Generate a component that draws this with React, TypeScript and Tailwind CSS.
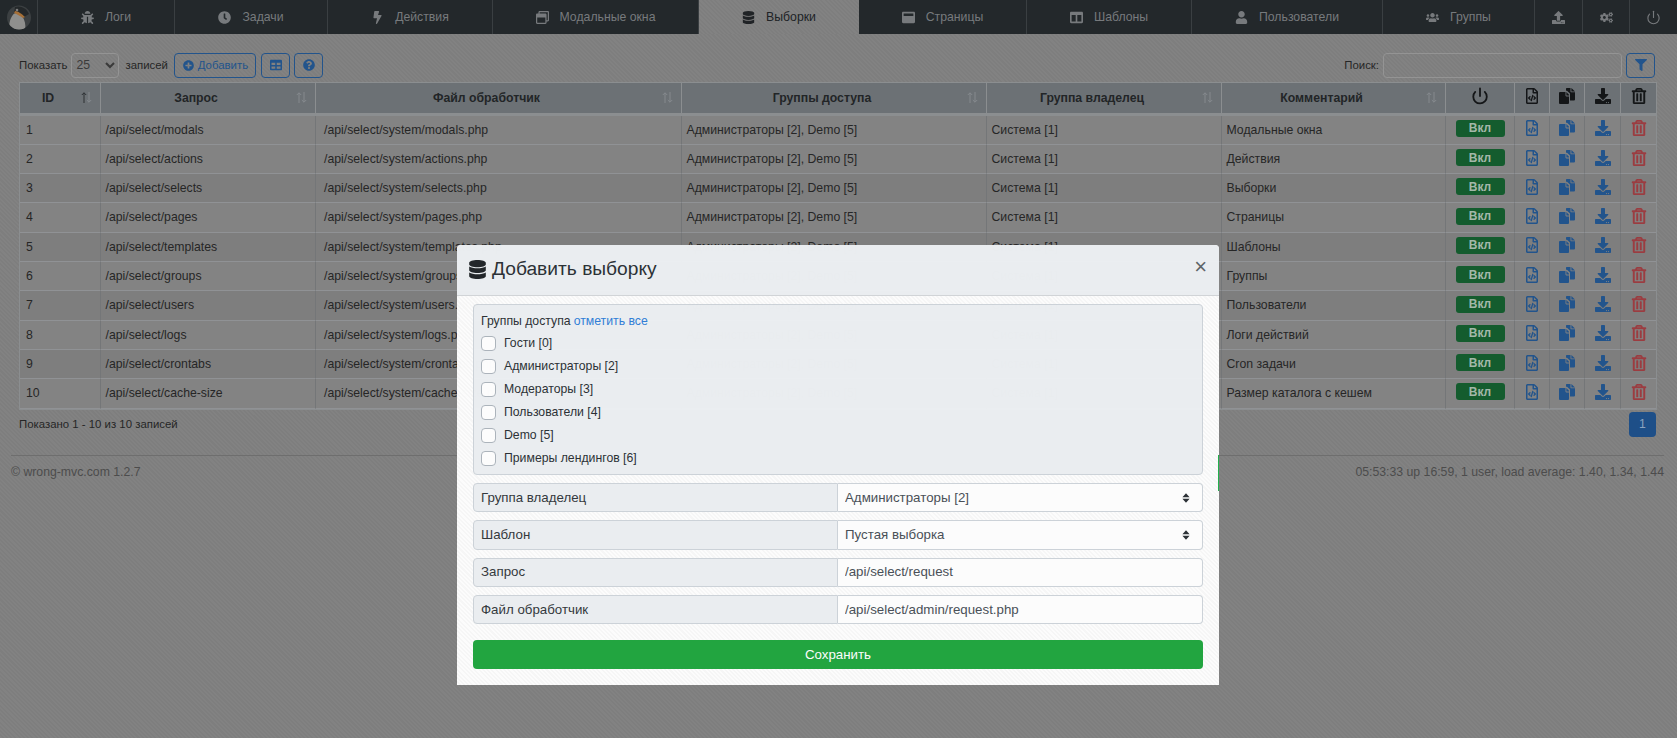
import { FaBug, FaClock, FaBolt, FaRegWindowRestore, FaDatabase, FaWindowMaximize, FaColumns, FaUser, FaUsers, FaUpload, FaCogs, FaPlusCircle, FaTable, FaQuestionCircle, FaFilter, FaRegFileCode, FaDownload, FaRegTrashAlt } from "react-icons/fa"
import { Power } from "lucide-react"

const tabs = [
    { label: "Логи", icon: FaBug },
    { label: "Задачи", icon: FaClock },
    { label: "Действия", icon: FaBolt },
    { label: "Модальные окна", icon: FaRegWindowRestore },
    { label: "Выборки", icon: FaDatabase, active: true },
    { label: "Страницы", icon: FaWindowMaximize },
    { label: "Шаблоны", icon: FaColumns },
    { label: "Пользователи", icon: FaUser },
    { label: "Группы", icon: FaUsers },
    { icon: FaUpload },
    { icon: FaCogs },
]

const rows = [
    ["modals", "Модальные окна"],
    ["actions", "Действия"],
    ["selects", "Выборки"],
    ["pages", "Страницы"],
    ["templates", "Шаблоны"],
    ["groups", "Группы"],
    ["users", "Пользователи"],
    ["logs", "Логи действий"],
    ["crontabs", "Cron задачи"],
    ["cache-size", "Размер каталога с кешем"],
]

const groups = ["Гости [0]", "Администраторы [2]", "Модераторы [3]", "Пользователи [4]", "Demo [5]", "Примеры лендингов [6]"]

const Logo = () => (
    <svg width="24" height="25" viewBox="0 0 24 25">
        <clipPath id="logo-clip"><circle cx="12" cy="12.5" r="12" /></clipPath>
        <g clipPath="url(#logo-clip)">
            <rect width="24" height="25" fill="#3c4042" />
            <path d="M2 25 C2 14 5 9 10 7 L15 11 C18 15 19 20 18 25 Z" fill="#8f8f8d" />
            <path d="M8 2 C13 0 20 3 22 9 L17 12 C14 10 10 8 7 8 Z" fill="#24282a" />
            <path d="M8 6 C11 6 15 9 18 12 L16 13 C13 11 10 9 7 8 Z" fill="#a56f37" />
            <circle cx="10" cy="5" r="1.3" fill="#7d7d7d" />
        </g>
    </svg>
)

const CopyIcon = ({ className }: { className: string }) => (
    <svg viewBox="0 0 16 16" className={className} fill="currentColor">
        <path d="M7 0.6 a0.8 0.8 0 0 1 0.8 -0.6 H11.5 V3.6 a0.6 0.6 0 0 0 0.6 0.6 H16 V11.4 a1 1 0 0 1 -1 1 H11 V5.5 L8 2.8 H7 Z" />
        <path d="M12.4 0 L16 3.4 H12.4 Z" />
        <path d="M1 4 H6.5 V7.6 a0.8 0.8 0 0 0 0.8 0.8 H10 V15 a1 1 0 0 1 -1 1 H1 a1 1 0 0 1 -1 -1 V5 a1 1 0 0 1 1 -1 Z" />
        <path d="M7.4 4 L10 6.8 V7.4 H7.4 Z" />
    </svg>
)

const TrashIcon = () => <FaRegTrashAlt size={16} stroke="currentColor" strokeWidth={14} />

const SortArrows = ({ active }: { active?: boolean }) => (
    <svg viewBox="0 0 11 11" className="absolute right-[8px] top-[9px] w-[11px] h-[11px]" fill="none" strokeWidth="1">
        <path d="M3 11 V0.8 M0.8 3 L3 0.8 L5.2 3" className={active ? "stroke-[#2c3033]" : "stroke-[#858a8e]"} />
        <path d="M8 0 V10.2 M5.8 8 L8 10.2 L10.2 8" className="stroke-[#858a8e]" />
    </svg>
)

const Th = ({ title, active }: { title: string; active?: boolean }) => (
    <th className="relative bg-[#6c7175] border-r border-b-[3px] border-r-[#8b8e90] border-b-[#8b8e90] pl-[6px] pr-[30px] pt-[1px] text-center font-bold text-[#222527]">
        {title}
        <SortArrows active={active} />
    </th>
)

const IconTh = ({ children }: { children: React.ReactNode }) => (
    <th className="bg-[#6c7175] border-r border-b-[3px] border-r-[#8b8e90] border-b-[#8b8e90] last:border-r-0 text-[#141618]">
        <div className="flex justify-center -mt-[3px]">{children}</div>
    </th>
)

const Td = ({ children, pad = "px-[4.5px]" }: { children: React.ReactNode; pad?: string }) => (
    <td className={`border-r border-b border-r-[#747678] border-b-[#909295] overflow-hidden whitespace-nowrap last:border-r-0 ${pad}`}>{children}</td>
)

const IconTd = ({ children, color }: { children: React.ReactNode; color: string }) => (
    <td className={`border-r border-b border-r-[#747678] border-b-[#909295] last:border-r-0 ${color}`}>
        <div className="flex justify-center -mt-[3px]">{children}</div>
    </td>
)

const FormRow = ({ label, children }: { label: string; children: React.ReactNode }) => (
    <div className="flex h-[29.33px] text-[13.3px]">
        <div className="w-[365px] bg-[#edf0f3] border border-[#ced4da] rounded-l-[4px] px-[7px] flex items-center text-[#33383c]">{label}</div>
        {children}
    </div>
)

const SelectField = ({ value }: { value: string }) => (
    <div className="relative flex-1">
        <select defaultValue={value} className="appearance-none w-full h-full bg-white border border-l-0 border-[#ced4da] rounded-r-[4px] px-[7px] text-[#495057] outline-none">
            <option>{value}</option>
        </select>
        <svg viewBox="0 0 10 12" className="absolute right-[13px] top-[10px] w-[8px] h-[10px] text-[#2b3035]" fill="currentColor">
            <path d="M5 0 L9.5 5 H0.5 Z M5 12 L0.5 7 H9.5 Z" />
        </svg>
    </div>
)

const TextField = ({ value }: { value: string }) => (
    <input readOnly defaultValue={value} className="flex-1 min-w-0 bg-white border border-l-0 border-[#ced4da] rounded-r-[4px] px-[7px] text-[#495057] outline-none" />
)

const App = () => {
    return (
        <div className="relative h-[738px] overflow-hidden text-[12.25px] text-[#262626] font-['Liberation_Sans',Arial,sans-serif] bg-[repeating-linear-gradient(45deg,#828282_0px,#828282_1.5px,#7e7e7e_1.5px,#7e7e7e_3px)]">
            <nav className="grid h-[34px] grid-cols-[38px_137px_153px_165px_206px_160px_168px_165px_191px_152px_48px_47px_47px] bg-[#23282b] text-[#777a7d]">
                <div className="flex items-center justify-center border-r border-[#3a3f42]">
                    <Logo />
                </div>
                {tabs.map((tab, i) => {
                    const Icon = tab.icon
                    return (
                        <div
                            key={i}
                            className={tab.active
                                ? "flex items-center justify-center gap-[11px] text-[#202326] bg-[repeating-linear-gradient(45deg,#828282_0px,#828282_1.5px,#7e7e7e_1.5px,#7e7e7e_3px)]"
                                : "flex items-center justify-center gap-[11px] border-r border-[#3a3f42]"}
                        >
                            <Icon size={13} />
                            {tab.label && <span>{tab.label}</span>}
                        </div>
                    )
                })}
                <div className="flex items-center justify-center">
                    <Power size={15} strokeWidth={1.8} />
                </div>
            </nav>

            <main className="pl-[11px] pr-[13px]">
                <div className="pl-[8px] pr-[9px]">
                    <div className="flex items-center justify-between pt-[15px] h-[47.6px] text-[11.4px]">
                        <div className="flex items-center">
                            <span>Показать</span>
                            <select defaultValue="25" className="ml-[4px] w-[48px] h-[25.4px] pl-0 border border-[#949494] rounded-[4px] bg-transparent text-[#3a3a3a] text-[12.25px]">
                                <option>25</option>
                            </select>
                            <span className="ml-[6px]">записей</span>
                            <button className="ml-[6.5px] flex items-center justify-center gap-[4px] w-[82px] h-[25.4px] border border-[#22548c] rounded-[4px] text-[#22548c]">
                                <FaPlusCircle size={11} />
                                Добавить
                            </button>
                            <button className="ml-[5px] flex items-center justify-center w-[29px] h-[25.4px] border border-[#22548c] rounded-[4px] text-[#22548c]">
                                <FaTable size={12} />
                            </button>
                            <button className="ml-[4px] flex items-center justify-center w-[29px] h-[25.4px] border border-[#22548c] rounded-[4px] text-[#22548c]">
                                <FaQuestionCircle size={12} />
                            </button>
                        </div>
                        <div className="flex items-center">
                            <span>Поиск:</span>
                            <input readOnly className="ml-[4px] w-[239px] h-[25.4px] border border-[#949494] rounded-[4px] bg-transparent" />
                            <button className="ml-[4px] flex items-center justify-center w-[29px] h-[25.4px] border border-[#22548c] rounded-[4px] text-[#22548c]">
                                <FaFilter size={12} />
                            </button>
                        </div>
                    </div>

                    <table className="w-[1637px] table-fixed border-separate border-spacing-0 border border-[#8b8e90]">
                        <colgroup>
                            <col className="w-[81px]" />
                            <col className="w-[215px]" />
                            <col className="w-[366px]" />
                            <col className="w-[305px]" />
                            <col className="w-[235px]" />
                            <col className="w-[224px]" />
                            <col className="w-[69px]" />
                            <col className="w-[35px]" />
                            <col className="w-[35px]" />
                            <col className="w-[36px]" />
                            <col className="w-[35px]" />
                        </colgroup>
                        <thead>
                            <tr className="h-[33px]">
                                <Th title="ID" active />
                                <Th title="Запрос" />
                                <Th title="Файл обработчик" />
                                <Th title="Группы доступа" />
                                <Th title="Группа владелец" />
                                <Th title="Комментарий" />
                                <IconTh><Power size={18} strokeWidth={2.4} /></IconTh>
                                <IconTh><FaRegFileCode size={16} /></IconTh>
                                <IconTh><CopyIcon className="w-[16px] h-[16px]" /></IconTh>
                                <IconTh><FaDownload size={16} /></IconTh>
                                <IconTh><TrashIcon /></IconTh>
                            </tr>
                        </thead>
                        <tbody>
                            {rows.map(([name, comment], i) => (
                                <tr key={name} className={i > 1 && i % 2 === 0 ? "h-[29.3px] bg-[#7e7e7e]" : "h-[29.3px] bg-[#838383]"}>
                                    <Td pad="px-[6px]">{i + 1}</Td>
                                    <Td>/api/select/{name}</Td>
                                    <Td pad="px-[8px]">/api/select/system/{name}.php</Td>
                                    <Td>Администраторы [2], Demo [5]</Td>
                                    <Td>Система [1]</Td>
                                    <Td>{comment}</Td>
                                    <IconTd color="text-[#145c2e]">
                                        <span className="flex items-center justify-center w-[49px] h-[17px] rounded-[3px] bg-[#145c2e] text-[#a3b8a9] font-bold text-[12px]">Вкл</span>
                                    </IconTd>
                                    <IconTd color="text-[#22548c]"><FaRegFileCode size={16} /></IconTd>
                                    <IconTd color="text-[#22548c]"><CopyIcon className="w-[16px] h-[16px]" /></IconTd>
                                    <IconTd color="text-[#22548c]"><FaDownload size={16} /></IconTd>
                                    <IconTd color="text-[#9c3c40]"><TrashIcon /></IconTd>
                                </tr>
                            ))}
                        </tbody>
                    </table>

                    <div className="flex justify-between items-start pt-[2px] h-[45px]">
                        <span className="mt-[4px] text-[11.4px]">Показано 1 - 10 из 10 записей</span>
                        <span className="-mr-[1px] flex items-center justify-center w-[27px] h-[25px] rounded-[4px] bg-[#1e4f88] text-[#8ba3bf]">1</span>
                    </div>
                </div>
                <footer className="flex justify-between items-center border-t border-[#6e6e6e] pt-[7px] text-[#4c4c4c]">
                    <span>© wrong-mvc.com 1.2.7</span>
                    <span>05:53:33 up 16:59, 1 user, load average: 1.40, 1.34, 1.44</span>
                </footer>
            </main>

            <div className="absolute left-[457px] top-[245px] w-[762px] h-[440px] rounded-t-[4px] opacity-[0.98] text-[12.25px] text-[#2b3035] bg-[repeating-linear-gradient(45deg,#ffffff_0px,#ffffff_1.5px,#f9f9f9_1.5px,#f9f9f9_3px)]">
                <div className="flex items-center h-[50.5px] pl-[11px] pr-[12px] bg-[#edf0f3] border-b border-[#d3d6d9] rounded-t-[4px]">
                    <FaDatabase size={19} className="text-[#212529]" />
                    <h5 className="ml-[5px] text-[19.2px] text-[#2b3035]">Добавить выборку</h5>
                    <span className="ml-auto -mt-[6px] text-[22px] leading-none text-[#5f6468]">×</span>
                </div>
                <div className="px-[16px] pt-[8.5px]">
                    <div className="h-[171px] bg-[#edf0f3] border border-[#ced4da] rounded-[4px] px-[7px] pt-[6px]">
                        <div className="h-[20px] flex items-center">
                            <span>Группы доступа</span>
                            <span className="ml-[3px] text-[#2f7ed8]">отметить все</span>
                        </div>
                        <div className="flex flex-col gap-[8px] mt-[5px]">
                            {groups.map(group => (
                                <label key={group} className="flex items-center h-[15px]">
                                    <input type="checkbox" className="appearance-none w-[15px] h-[15px] bg-white border border-[#adb5bd] rounded-[4px]" />
                                    <span className="ml-[8px]">{group}</span>
                                </label>
                            ))}
                        </div>
                    </div>
                    <div className="flex flex-col gap-[8px] mt-[8px]">
                        <FormRow label="Группа владелец"><SelectField value="Администраторы [2]" /></FormRow>
                        <FormRow label="Шаблон"><SelectField value="Пустая выборка" /></FormRow>
                        <FormRow label="Запрос"><TextField value="/api/select/request" /></FormRow>
                        <FormRow label="Файл обработчик"><TextField value="/api/select/admin/request.php" /></FormRow>
                    </div>
                    <button className="mt-[16px] w-full h-[29px] rounded-[4px] bg-[#21a63f] text-white text-[13.3px]">Сохранить</button>
                </div>
            </div>

            <div className="absolute left-[1218px] top-[455px] w-px h-[36px] bg-[#22b14c]" />
        </div>
    )
}

export default App
